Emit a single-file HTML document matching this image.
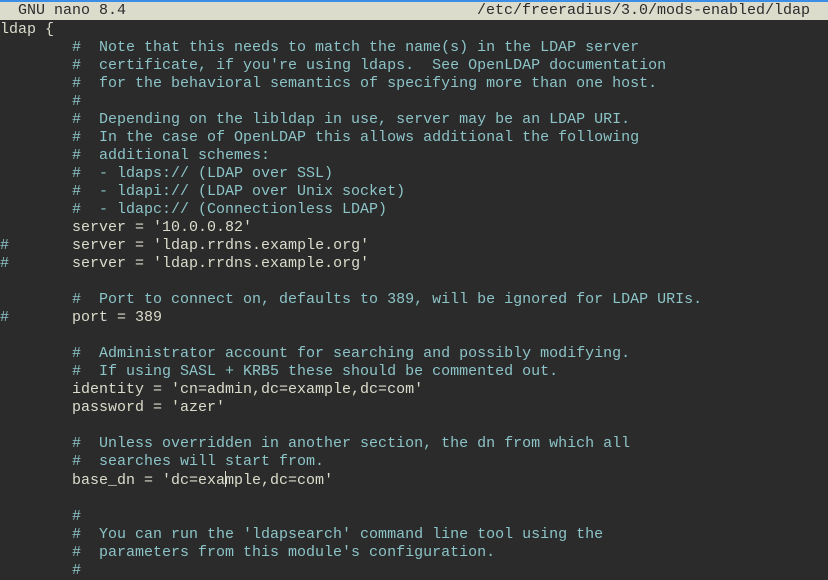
<!DOCTYPE html>
<html><head><meta charset="utf-8"><style>
html,body{margin:0;padding:0;background:#2b2b2b;width:828px;height:572px;overflow:hidden}
body{font-family:"Liberation Mono","Cousine","Courier New",Courier,monospace;font-size:15px;color:#dcdccc}
.top{position:absolute;left:0;top:0;width:828px;height:2px;background:#3a8ee6}
.hdr{position:absolute;left:0;top:2px;width:828px;height:18px;background:#dcdccc;color:#2b2b2b;line-height:18px;white-space:pre}
.hdr .r{position:absolute;right:18px;top:0}
pre{position:absolute;left:0;top:21px;margin:0;font-family:"Liberation Mono","Cousine","Courier New",Courier,monospace;font-size:15px;line-height:18px;white-space:pre}
.c{color:#8cc4c8}
.cur{display:inline-block;width:0;border-left:1px solid #dcdccc;height:16px;vertical-align:-3px;margin-right:-1px}
</style></head><body>
<div class="top"></div>
<div class="hdr">  GNU nano 8.4<span class="r">/etc/freeradius/3.0/mods-enabled/ldap</span></div>
<pre>ldap {
<span class="c">        #  Note that this needs to match the name(s) in the LDAP server
        #  certificate, if you're using ldaps.  See OpenLDAP documentation
        #  for the behavioral semantics of specifying more than one host.
        #
        #  Depending on the libldap in use, server may be an LDAP URI.
        #  In the case of OpenLDAP this allows additional the following
        #  additional schemes:
        #  - ldaps:// (LDAP over SSL)
        #  - ldapi:// (LDAP over Unix socket)
        #  - ldapc:// (Connectionless LDAP)</span>
        server = '10.0.0.82'
<span class="c">#</span>       server = 'ldap.rrdns.example.org'
<span class="c">#</span>       server = 'ldap.rrdns.example.org'

<span class="c">        #  Port to connect on, defaults to 389, will be ignored for LDAP URIs.</span>
<span class="c">#</span>       port = 389

<span class="c">        #  Administrator account for searching and possibly modifying.
        #  If using SASL + KRB5 these should be commented out.</span>
        identity = 'cn=admin,dc=example,dc=com'
        password = 'azer'

<span class="c">        #  Unless overridden in another section, the dn from which all
        #  searches will start from.</span>
        base_dn = 'dc=exa<span class="cur"></span>mple,dc=com'

<span class="c">        #
        #  You can run the 'ldapsearch' command line tool using the
        #  parameters from this module's configuration.
        #</span>
</pre>
</body></html>
